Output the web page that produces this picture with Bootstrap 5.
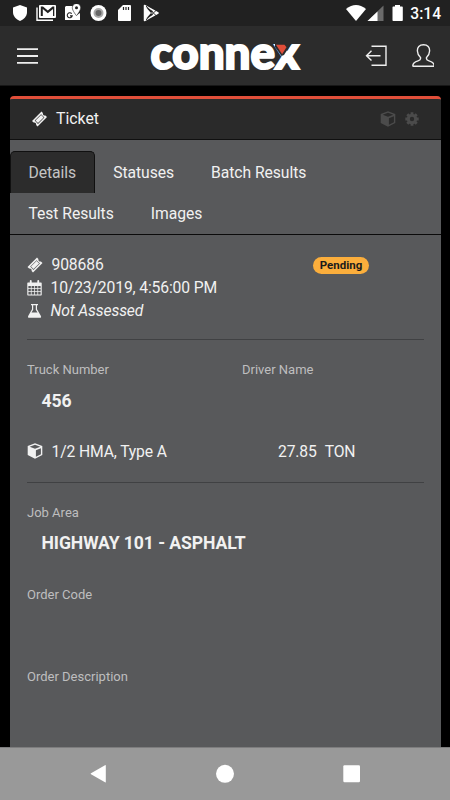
<!DOCTYPE html>
<html lang="en">
<head>
<meta charset="utf-8">
<meta name="viewport" content="width=device-width, initial-scale=1">
<title>Connex Ticket</title>
<link href="https://cdn.jsdelivr.net/npm/bootstrap@5.3.0/dist/css/bootstrap.min.css" rel="stylesheet">
<style>
body{width:450px;height:800px;background:#000;color:#f1f1f1;font-family:Roboto,"Liberation Sans",sans-serif;font-size:15.7px;letter-spacing:-.14px}
svg{display:block;flex:none}
.status-bar{height:26px;background:#212121;padding-top:4px}
.clock{font-size:15.6px;font-weight:500;line-height:20px;color:#fff;margin-left:7px;letter-spacing:0}
.status-end{margin-right:9px}
.app-bar{height:60px;background:#2c2c2c;border-bottom:1px solid #171717}
.brand-logo{overflow:visible;letter-spacing:0}
.panel{margin:10px 9px 0 10px;width:431px;background:#58595b;border-radius:4px 4px 0 0;border-top:3px solid #e04e39;min-height:0}
.panel-head{height:41px;background:#2a2a2a;border-bottom:1px solid #101010;padding:0 21px}
.panel-title{font-size:15.8px;letter-spacing:0}
.head-tools{color:#4b4b4b}
.panel-tabs{padding-top:11px;height:95px;border-bottom:1px solid #0b0b0b;font-size:15.7px;letter-spacing:-.05px}
.panel-tabs .nav-link{color:#f1f1f1;height:42px;padding:0 17.5px;line-height:42px;border-width:1px 1px 0 1px;border-radius:5px 5px 0 0;margin-bottom:-1px}
.panel-tabs .nav-link.active{background:#2c2c2c;color:#c4c4c4;border-color:#101010}
.panel-body{padding:0 17px}
.summary{padding-top:18.5px;height:104px}
.info-line{height:23px}
.info-line svg{margin-right:8.5px}
.info-line svg,.product-row svg{margin-top:-1px}
.status-pill{background:#fbae3c;color:#1b1b1b;font-size:11.5px;font-weight:700;line-height:17px;padding:0;height:17px;width:56px;margin:3px 55px 0 0;letter-spacing:0}
.rule{height:1px;background:#404143}
.fields{padding-top:20px}
.field-label{font-size:13px;line-height:20px;color:#bebebf;letter-spacing:0}
.field-value{font-size:17.6px;line-height:24px;font-weight:700;padding-left:14.5px;margin-top:8.5px;height:33px;letter-spacing:-.08px}
.order-label{margin-top:20.5px}
.driver{padding-left:16.5px}
.product-row{height:60px}
.product-name{width:235px;padding-left:8.5px}
.sys-nav{height:53px;background:#999;border-top:1px solid #7d7d7e}
</style>
<script src="https://cdn.jsdelivr.net/npm/bootstrap@5.3.0/dist/js/bootstrap.bundle.min.js"></script>
</head>
<body class="d-flex flex-column overflow-hidden m-0">
<svg width="0" height="0" class="position-absolute">
<defs>
<symbol id="ticket" viewBox="0 0 16 16"><path fill-rule="evenodd" fill="currentColor" d="M10 .6 11.400 2a2 2 0 0 0 2.500 2.500L15.500 6 6 15.400 4.600 14a2 2 0 0 0-2.500-2.500L.5 10ZM9.600 3.200 3.200 9.600l3.300 3.300 6.400-6.400ZM9.600 4 12.100 6.500 6.500 12.100 4 9.600Z"/></symbol>
<symbol id="cube" viewBox="0 0 16 16"><path fill="currentColor" fill-rule="evenodd" d="M8 .3 15.300 3v9L8 15.700.7 12V3ZM8 1.700 2.700 3.700 8 5.700l5.300-2ZM8.900 7.200v6.500l5-2.500V5.200Z"/></symbol>
</defs>
</svg>

<header class="status-bar d-flex align-items-start flex-shrink-0">
<svg width="164" height="20" viewBox="0 4 164 20">
<path fill="#fff" d="M20 5 27 7.500V12c0 4-3 7.500-7 9-4-1.500-7-5-7-9V7.500Z"/>
<path fill="none" stroke="#fff" stroke-width="1.400" d="M37 7.500v12.800h16"/>
<path fill="#fff" fill-rule="evenodd" d="M40 5h15q1 0 1 1v11q0 1-1 1H40q-1 0-1-1V6q0-1 1-1Zm0.800 1.500V16h2V9l5 4.300L53 9v7h1.300V6.500h-1.700l-4.800 4-4.800-4Z"/>
<path fill="#fff" d="M66 6h7l1 5 3 4 3-2v7H65V7Z"/>
<path fill="#fff" stroke="#212121" stroke-width=".6" d="M76.500 3.500a4.200 4.200 0 0 1 4.200 4.200c0 3-4.200 8-4.200 8s-4.200-5-4.200-8a4.200 4.200 0 0 1 4.200-4.200Z"/>
<circle cx="76.500" cy="7.700" r="1.500" fill="#222"/>
<path fill="none" stroke="#222" stroke-width="1.100" d="M71.700 13.700a2.500 2.500 0 1 0 .5 2.200H70"/>
<circle cx="98.500" cy="13" r="8" fill="#fff"/><circle cx="98.500" cy="13" r="4" fill="#666" stroke="#aaa" stroke-width="2"/>
<path fill="#fff" d="M123 5h7q1 0 1 1v14q0 1-1 1h-11q-1 0-1-1V10Z"/>
<path stroke="#222" stroke-width="1.200" d="M123.500 7v3M126 7v3M128.500 7v3"/>
<path fill="none" stroke="#fff" stroke-width="1.500" stroke-linejoin="round" d="M144.500 5.500 158 13l-13.500 7.500Z"/>
<path fill="#fff" d="m144 5 7 8-7 8Zm7 8 3-2.500 4.500 2.500-4.500 2.500Z"/>
<path stroke="#212121" stroke-width=".9" fill="none" d="m146 6 10 9.500M146 20l10-9.500"/>
</svg>
<div class="d-flex ms-auto status-end">
<svg width="58" height="20" viewBox="345.500 4 58 20">
<path fill="#fff" d="M346.500 9q10-8 20 0l-10 12Z"/><path fill="#6a6a6a" d="M384 5.500V21h-16Z"/><path fill="#fff" d="M378 11.500V21h-10Z"/>
<path fill="#fff" d="M395.500 5h5v1.500h2q.8 0 .8.800v13q0 .8-.8.800h-8.700q-.8 0-.8-.8v-13q0-.8.800-.8h1.700Z"/>
</svg>
<span class="clock">3:14</span>
</div>
</header>

<nav class="app-bar d-flex align-items-center justify-content-between flex-shrink-0 px-3">
<svg width="70" height="24" viewBox="0 0 70 24"><path stroke="#eee" stroke-width="1.800" d="M1 5.200h21M1 12h21M1 18.800h21"/></svg>
<svg class="brand-logo" width="156" height="58" viewBox="147 26 156 58" role="img" aria-label="connex">
<text x="149.500" y="67.500" font-family="Lato,sans-serif" font-weight="900" font-size="45" fill="#fff" stroke="#fff" stroke-width="2" textLength="148.500" lengthAdjust="spacingAndGlyphs">connex</text>
<path fill="#2c2c2c" d="M274 40h16v3l-7 11-2.500 1-6.500-9Z"/><path fill="#e04e39" d="M275 43.800h8.500l2 2.400-4.400 7Z"/>
</svg>
<svg width="69" height="28" viewBox="365 40 69 28" fill="none" stroke="#eee" stroke-width="1.400">
<path d="M371.500 44.200H386v19h-14.500M380.500 53.700H367.500M371.500 48.800l-5 4.900 5 4.900"/>
<path stroke-linejoin="round" d="M423.500 42.800c-4.200 0-6.300 2.500-6.100 6.200.1 3 1.400 5 3.100 6.500.5 1.900-.6 2.800-2.500 3.400-3 1-5.200 2-5.200 4.800q0 .6.700.6h20q.7 0 .7-.6c0-2.800-2.200-3.800-5.200-4.800-1.900-.6-3-1.500-2.500-3.400 1.700-1.500 3-3.500 3.100-6.500.2-3.700-1.900-6.200-6.100-6.200Z"/>
</svg>
</nav>

<main class="panel flex-grow-1 overflow-hidden">
<div class="panel-head d-flex align-items-center">
<svg width="17" height="16"><use href="#ticket"/></svg>
<span class="ms-2 panel-title">Ticket</span>
<div class="head-tools d-flex ms-auto">
<svg width="16" height="16" class="me-2"><use href="#cube"/></svg>
<svg width="16" height="16" viewBox="-8 -8 16 16"><circle r="3.700" fill="none" stroke="currentColor" stroke-width="3"/><path stroke="currentColor" stroke-width="2.800" d="M0-6.700v2.500M0 6.700V4.200M-6.700 0h2.500M6.700 0H4.200M-4.700-4.700l1.700 1.700M4.700 4.700 3 3M-4.700 4.700 -3 3M4.700-4.700 3-3"/></svg>
</div>
</div>
<ul class="nav nav-tabs panel-tabs align-content-start">
<li class="nav-item"><a class="nav-link active" href="#">Details</a></li>
<li class="nav-item"><a class="nav-link" href="#">Statuses</a></li>
<li class="nav-item"><a class="nav-link" href="#">Batch Results</a></li>
<li class="nav-item"><a class="nav-link" href="#">Test Results</a></li>
<li class="nav-item"><a class="nav-link" href="#">Images</a></li>
</ul>
<div class="panel-body">
<section class="summary d-flex justify-content-between align-items-start">
<div>
<div class="info-line d-flex align-items-center"><svg width="16" height="16"><use href="#ticket"/></svg>908686</div>
<div class="info-line d-flex align-items-center"><svg width="15" height="16" viewBox="0 0 16 16" preserveAspectRatio="none"><path fill="currentColor" fill-rule="evenodd" d="M1 2.500h2V1q0-1 1-1t1 1v1.500h6V1q0-1 1-1t1 1v1.500h2q.7 0 .7.700v11.600q0 .7-.7.700H1q-.7 0-.7-.7V3.200q0-.7.7-.7ZM1.500 6v2.200h2.600V6Zm3.400 0v2.200h2.700V6Zm3.500 0v2.200h2.700V6Zm3.500 0v2.200h2.600V6ZM1.500 9v2.200h2.600V9Zm3.400 0v2.200h2.700V9Zm3.500 0v2.200h2.700V9Zm3.500 0v2.200h2.600V9ZM1.500 12v2.400h2.600V12Zm3.400 0v2.400h2.700V12Zm3.500 0v2.400h2.700V12Zm3.500 0v2.400h2.600V12Z"/></svg>10/23/2019, 4:56:00 PM</div>
<div class="info-line d-flex align-items-center fst-italic"><svg width="15" height="16" viewBox="0 0 15 16"><path fill="currentColor" fill-rule="evenodd" d="M4 1h7v1.300h-1v4L13.800 12.700q1 2-1 2H2.300q-2 0-1-2L5 6.300v-4H4ZM6.200 2.300v4.400L4.500 9.500h6L8.800 6.700V2.300Z"/></svg>Not Assessed</div>
</div>
<span class="status-pill badge rounded-pill">Pending</span>
</section>
<div class="rule"></div>
<section class="row gx-0 fields">
<div class="col-6"><div class="field-label">Truck Number</div><div class="field-value">456</div></div>
<div class="col-6"><div class="field-label driver">Driver Name</div></div>
</section>
<section class="d-flex align-items-center product-row">
<svg width="16" height="16"><use href="#cube"/></svg><span class="product-name">1/2 HMA, Type A</span><span class="me-2">27.85</span><span>TON</span>
</section>
<div class="rule"></div>
<section class="fields">
<div class="field-label">Job Area</div><div class="field-value">HIGHWAY 101 - ASPHALT</div>
<div class="field-label order-label">Order Code</div><div class="field-value"></div>
<div class="field-label order-label">Order Description</div>
</section>
</div>
</main>

<footer class="sys-nav flex-shrink-0 d-flex justify-content-center">
<svg width="450" height="52" viewBox="0 748 450 52" fill="#fff"><path d="M105.800 765.500v16.500q0 .8-.8.300L91 774.300q-.8-.5 0-1l14-8q.8-.5.800.2Z"/><circle cx="225" cy="773.800" r="9"/><rect x="343.300" y="765.300" width="16.700" height="17" rx="1.200"/></svg>
</footer>
</body>
</html>
